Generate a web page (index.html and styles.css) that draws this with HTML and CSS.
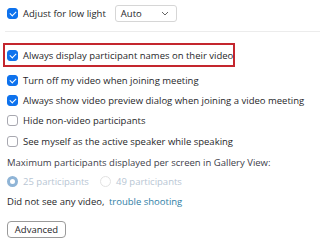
FILE: index.html
```html
<!DOCTYPE html>
<html lang="en">
<head>
  <meta charset="UTF-8" />
  <title>Video Settings</title>
  <link rel="stylesheet" href="styles.css">
</head>
<body>
  <div class="settings">
    <div class="row top-row">
      <span class="check checked"></span>
      <span class="label">Adjust for low light</span>
      <div class="select">
        <span>Auto</span>
        <svg class="chevron" width="8" height="5" viewBox="0 0 8 5"><path d="M1 1l3 3 3-3" fill="none" stroke="#666" stroke-width="1"/></svg>
      </div>
    </div>

    <div class="divider"></div>

    <div class="row highlight">
      <span class="check checked"></span>
      <span class="label">Always display participant names on their video</span>
    </div>

    <div class="row">
      <span class="check checked"></span>
      <span class="label">Turn off my video when joining meeting</span>
    </div>
    <div class="row">
      <span class="check checked"></span>
      <span class="label">Always show video preview dialog when joining a video meeting</span>
    </div>
    <div class="row">
      <span class="check"></span>
      <span class="label">Hide non-video participants</span>
    </div>
    <div class="row spaced">
      <span class="check"></span>
      <span class="label">See myself as the active speaker while speaking</span>
    </div>

    <div class="row spaced">
      <span class="label muted">Maximum participants displayed per screen in Gallery View:</span>
    </div>

    <div class="row radios">
      <span class="radio selected"></span>
      <span class="label disabled first-option">25 participants</span>
      <span class="radio"></span>
      <span class="label disabled">49 participants</span>
    </div>

    <div class="row">
      <span class="label">Did not see any video, <a href="#" class="link">trouble shooting</a></span>
    </div>

    <button class="advanced">Advanced</button>
  </div>
</body>
</html>
```

FILE: styles.css
```css
* {
  box-sizing: border-box;
}

body {
  margin: 0;
  background: #ffffff;
  font-family: 'Open Sans', sans-serif;
  font-size: 9.5px;
  color: #1f1f2a;
  width: 320px;
  height: 250px;
  overflow: hidden;
}

.settings {
  padding: 0 0 0 7px;
}

.row {
  display: flex;
  align-items: center;
  height: 20px;
  gap: 5px;
  white-space: nowrap;
}

.row.spaced {
  margin-top: 1px;
}

.top-row {
  height: 26px;
}

.check {
  width: 11px;
  height: 11px;
  border: 1px solid #a8a8b0;
  border-radius: 3px;
  background: #fff;
  flex-shrink: 0;
  position: relative;
}

.check.checked {
  background: #0e72ed;
  border-color: #0e72ed;
}

.check.checked::after {
  content: "";
  position: absolute;
  left: 3px;
  top: 1px;
  width: 3px;
  height: 5px;
  border: solid #fff;
  border-width: 0 1.5px 1.5px 0;
  transform: rotate(45deg);
}

.select {
  margin-left: 4px;
  width: 62px;
  height: 17px;
  border: 1px solid #d6d6d6;
  border-radius: 3px;
  display: flex;
  align-items: center;
  justify-content: space-between;
  padding: 0 7px 0 5px;
}

.divider {
  height: 1px;
  background: #ececec;
  margin: 5px 0 11px -2px;
}

.highlight {
  margin-left: -4px;
  padding-left: 2px;
  width: 232px;
  height: 24px;
  border: 2px solid #c4262e;
  margin-bottom: 3px;
}

.muted {
  color: #40404a;
}

.radios {
  height: 19px;
}

.radio {
  width: 11px;
  height: 11px;
  border-radius: 50%;
  flex-shrink: 0;
  border: 1px solid #e2e2e2;
}

.radio.selected {
  border: 3px solid #8fb4d6;
  background: #fff;
}

.first-option {
  width: 72px;
}

.disabled {
  color: #b8c6d4;
}

.link {
  color: #2e7ea6;
  text-decoration: none;
  margin-left: 2px;
}

.advanced {
  margin-top: 10px;
  width: 59px;
  height: 17px;
  padding: 0;
  font-family: inherit;
  font-size: 9.5px;
  color: #1f1f2a;
  background: #fff;
  border: 1px solid #9a9a9a;
  border-radius: 4px;
}
```
